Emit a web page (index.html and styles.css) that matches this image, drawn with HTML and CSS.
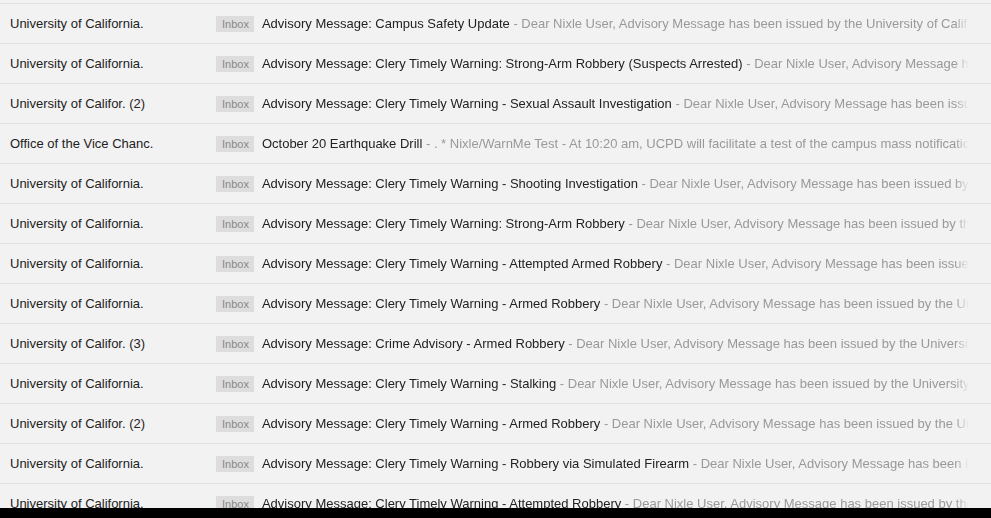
FILE: index.html
```html
<!DOCTYPE html>
<html>
<head>
<meta charset="utf-8">
<link rel="stylesheet" href="styles.css">
</head>
<body>
<div class="list">
  <div class="row"><span class="sender">University of California.</span><span class="label">Inbox</span><span class="text"><span class="subject">Advisory Message: Campus Safety Update</span><span class="snippet"> - Dear Nixle User, Advisory Message has been issued by the University of California Police Department</span></span></div>
  <div class="row"><span class="sender">University of California.</span><span class="label">Inbox</span><span class="text"><span class="subject">Advisory Message: Clery Timely Warning: Strong-Arm Robbery (Suspects Arrested)</span><span class="snippet"> - Dear Nixle User, Advisory Message has been issued by the University of California Police Department</span></span></div>
  <div class="row"><span class="sender">University of Califor. (2)</span><span class="label">Inbox</span><span class="text"><span class="subject">Advisory Message: Clery Timely Warning - Sexual Assault Investigation</span><span class="snippet"> - Dear Nixle User, Advisory Message has been issued by the University of California Police Department</span></span></div>
  <div class="row"><span class="sender">Office of the Vice Chanc.</span><span class="label">Inbox</span><span class="text"><span class="subject">October 20 Earthquake Drill</span><span class="snippet"> - . * Nixle/WarnMe Test - At 10:20 am, UCPD will facilitate a test of the campus mass notification system</span></span></div>
  <div class="row"><span class="sender">University of California.</span><span class="label">Inbox</span><span class="text"><span class="subject">Advisory Message: Clery Timely Warning - Shooting Investigation</span><span class="snippet"> - Dear Nixle User, Advisory Message has been issued by the University of California Police Department</span></span></div>
  <div class="row"><span class="sender">University of California.</span><span class="label">Inbox</span><span class="text"><span class="subject">Advisory Message: Clery Timely Warning: Strong-Arm Robbery</span><span class="snippet"> - Dear Nixle User, Advisory Message has been issued by the University of California Police Department</span></span></div>
  <div class="row"><span class="sender">University of California.</span><span class="label">Inbox</span><span class="text"><span class="subject">Advisory Message: Clery Timely Warning - Attempted Armed Robbery</span><span class="snippet"> - Dear Nixle User, Advisory Message has been issued by the University of California Police Department</span></span></div>
  <div class="row"><span class="sender">University of California.</span><span class="label">Inbox</span><span class="text"><span class="subject">Advisory Message: Clery Timely Warning - Armed Robbery</span><span class="snippet"> - Dear Nixle User, Advisory Message has been issued by the University of California Police Department</span></span></div>
  <div class="row"><span class="sender">University of Califor. (3)</span><span class="label">Inbox</span><span class="text"><span class="subject">Advisory Message: Crime Advisory - Armed Robbery</span><span class="snippet"> - Dear Nixle User, Advisory Message has been issued by the University of California Police Department</span></span></div>
  <div class="row"><span class="sender">University of California.</span><span class="label">Inbox</span><span class="text"><span class="subject">Advisory Message: Clery Timely Warning - Stalking</span><span class="snippet"> - Dear Nixle User, Advisory Message has been issued by the University of California Police Department</span></span></div>
  <div class="row"><span class="sender">University of Califor. (2)</span><span class="label">Inbox</span><span class="text"><span class="subject">Advisory Message: Clery Timely Warning - Armed Robbery</span><span class="snippet"> - Dear Nixle User, Advisory Message has been issued by the University of California Police Department</span></span></div>
  <div class="row"><span class="sender">University of California.</span><span class="label">Inbox</span><span class="text"><span class="subject">Advisory Message: Clery Timely Warning - Robbery via Simulated Firearm</span><span class="snippet"> - Dear Nixle User, Advisory Message has been issued by the University of California Police Department</span></span></div>
  <div class="row"><span class="sender">University of California.</span><span class="label">Inbox</span><span class="text"><span class="subject">Advisory Message: Clery Timely Warning - Attempted Robbery</span><span class="snippet"> - Dear Nixle User, Advisory Message has been issued by the University of California Police Department</span></span></div>
</div>
</body>
</html>
```
FILE: styles.css
```css
html, body {
  margin: 0;
  padding: 0;
  background: #000;
}
body {
  font-family: "Liberation Sans", Arial, sans-serif;
  font-size: 13px;
}
.list {
  height: 508px;
  overflow: hidden;
  background: #f2f2f2;
  padding-top: 3px;
  box-sizing: border-box;
}
.row {
  display: flex;
  align-items: center;
  height: 40px;
  box-sizing: border-box;
  border-top: 1px solid #e0e0e0;
  padding: 0 22px 0 10px;
  white-space: nowrap;
}
.sender {
  flex: 0 0 206px;
  color: #222;
  overflow: hidden;
}
.label {
  flex: 0 0 auto;
  background: #dddddd;
  color: #888;
  font-size: 11px;
  line-height: 16px;
  height: 16px;
  padding: 0 5px 0 6px;
  margin-right: 8px;
}
.text {
  flex: 1 1 auto;
  min-width: 0;
  overflow: hidden;
  -webkit-mask-image: linear-gradient(to right, #000 calc(100% - 14px), transparent);
  mask-image: linear-gradient(to right, #000 calc(100% - 14px), transparent);
}
.subject {
  color: #222;
}
.snippet {
  color: #999;
}
```
